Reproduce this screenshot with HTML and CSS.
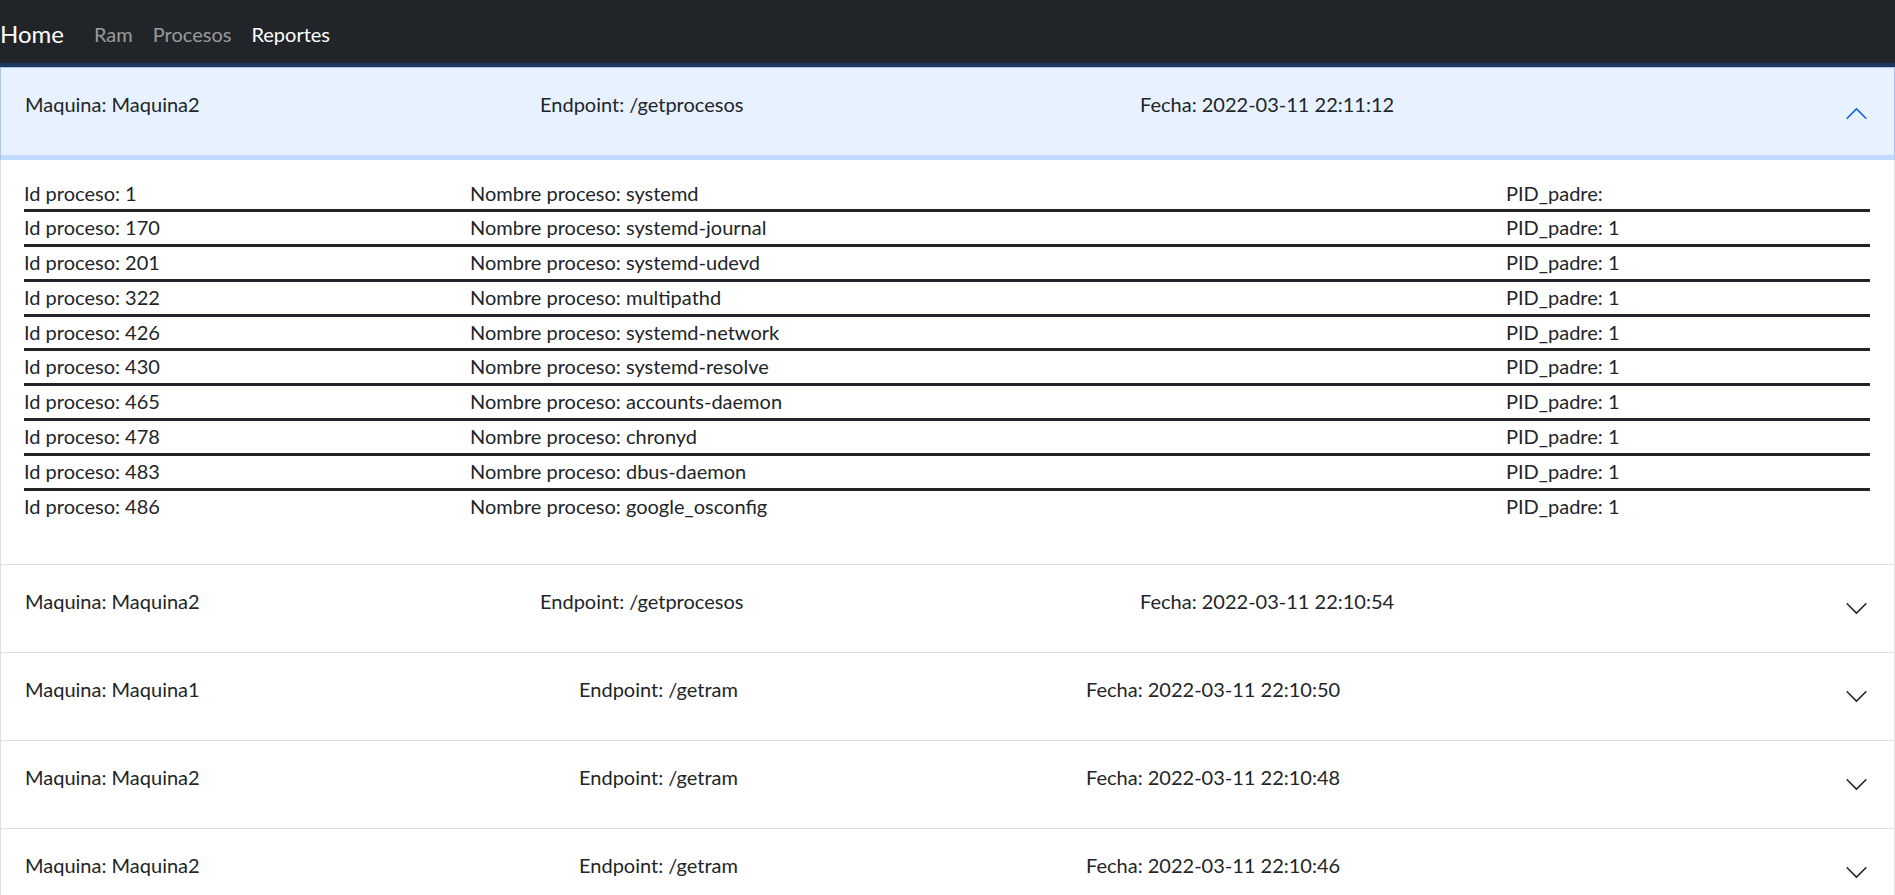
FILE: index.html
```html
<!DOCTYPE html>
<html lang="es">
<head>
<meta charset="utf-8">
<title>Reportes</title>
<link rel="stylesheet" href="styles.css">
</head>
<body>
<nav class="navbar">
  <a class="brand" href="#">Home</a>
  <a class="nav-link" href="#">Ram</a>
  <a class="nav-link" href="#">Procesos</a>
  <a class="nav-link active" href="#">Reportes</a>
</nav>

<div class="accordion">
  <div class="acc-item">
    <h2 class="acc-header">
      <button class="acc-btn open" type="button">
        <span class="hdr hdr-proc"><span>Maquina: Maquina2</span><span>Endpoint: /getprocesos</span><span>Fecha: 2022-03-11 22:11:12</span></span>
        <svg class="chev" viewBox="0 0 16 16"><path fill-rule="evenodd" d="M1.646 4.646a.5.5 0 0 1 .708 0L8 10.293l5.646-5.647a.5.5 0 0 1 .708.708l-6 6a.5.5 0 0 1-.708 0l-6-6a.5.5 0 0 1 0-.708z"/></svg>
      </button>
    </h2>
    <div class="acc-body">
      <ul class="proc-list">
        <li class="proc-row"><span>Id proceso: 1</span><span>Nombre proceso: systemd</span><span>PID_padre: </span></li>
        <li class="proc-row"><span>Id proceso: 170</span><span>Nombre proceso: systemd-journal</span><span>PID_padre: 1</span></li>
        <li class="proc-row"><span>Id proceso: 201</span><span>Nombre proceso: systemd-udevd</span><span>PID_padre: 1</span></li>
        <li class="proc-row"><span>Id proceso: 322</span><span>Nombre proceso: multipathd</span><span>PID_padre: 1</span></li>
        <li class="proc-row"><span>Id proceso: 426</span><span>Nombre proceso: systemd-network</span><span>PID_padre: 1</span></li>
        <li class="proc-row"><span>Id proceso: 430</span><span>Nombre proceso: systemd-resolve</span><span>PID_padre: 1</span></li>
        <li class="proc-row"><span>Id proceso: 465</span><span>Nombre proceso: accounts-daemon</span><span>PID_padre: 1</span></li>
        <li class="proc-row"><span>Id proceso: 478</span><span>Nombre proceso: chronyd</span><span>PID_padre: 1</span></li>
        <li class="proc-row"><span>Id proceso: 483</span><span>Nombre proceso: dbus-daemon</span><span>PID_padre: 1</span></li>
        <li class="proc-row"><span>Id proceso: 486</span><span>Nombre proceso: google_osconfig</span><span>PID_padre: 1</span></li>
      </ul>
    </div>
  </div>

  <div class="acc-item">
    <h2 class="acc-header">
      <button class="acc-btn" type="button">
        <span class="hdr hdr-proc"><span>Maquina: Maquina2</span><span>Endpoint: /getprocesos</span><span>Fecha: 2022-03-11 22:10:54</span></span>
        <svg class="chev" viewBox="0 0 16 16"><path fill-rule="evenodd" d="M1.646 4.646a.5.5 0 0 1 .708 0L8 10.293l5.646-5.647a.5.5 0 0 1 .708.708l-6 6a.5.5 0 0 1-.708 0l-6-6a.5.5 0 0 1 0-.708z"/></svg>
      </button>
    </h2>
  </div>

  <div class="acc-item">
    <h2 class="acc-header">
      <button class="acc-btn" type="button">
        <span class="hdr hdr-ram"><span>Maquina: Maquina1</span><span>Endpoint: /getram</span><span>Fecha: 2022-03-11 22:10:50</span></span>
        <svg class="chev" viewBox="0 0 16 16"><path fill-rule="evenodd" d="M1.646 4.646a.5.5 0 0 1 .708 0L8 10.293l5.646-5.647a.5.5 0 0 1 .708.708l-6 6a.5.5 0 0 1-.708 0l-6-6a.5.5 0 0 1 0-.708z"/></svg>
      </button>
    </h2>
  </div>

  <div class="acc-item">
    <h2 class="acc-header">
      <button class="acc-btn" type="button">
        <span class="hdr hdr-ram"><span>Maquina: Maquina2</span><span>Endpoint: /getram</span><span>Fecha: 2022-03-11 22:10:48</span></span>
        <svg class="chev" viewBox="0 0 16 16"><path fill-rule="evenodd" d="M1.646 4.646a.5.5 0 0 1 .708 0L8 10.293l5.646-5.647a.5.5 0 0 1 .708.708l-6 6a.5.5 0 0 1-.708 0l-6-6a.5.5 0 0 1 0-.708z"/></svg>
      </button>
    </h2>
  </div>

  <div class="acc-item">
    <h2 class="acc-header">
      <button class="acc-btn" type="button">
        <span class="hdr hdr-ram"><span>Maquina: Maquina2</span><span>Endpoint: /getram</span><span>Fecha: 2022-03-11 22:10:46</span></span>
        <svg class="chev" viewBox="0 0 16 16"><path fill-rule="evenodd" d="M1.646 4.646a.5.5 0 0 1 .708 0L8 10.293l5.646-5.647a.5.5 0 0 1 .708.708l-6 6a.5.5 0 0 1-.708 0l-6-6a.5.5 0 0 1 0-.708z"/></svg>
      </button>
    </h2>
  </div>
</div>
</body>
</html>
```

FILE: styles.css
```css
* {
  box-sizing: border-box;
}

html,
body {
  height: 895px;
  overflow: hidden;
}

body {
  margin: 0;
  font-family: Lato, "Liberation Sans", sans-serif;
  font-size: 20px;
  color: #212529;
  background: #fff;
}

.navbar {
  display: flex;
  align-items: center;
  height: 67px;
  background: #212529;
}

.brand {
  font-size: 24px;
  line-height: 36px;
  color: #fff;
  text-decoration: none;
  margin-right: 20px;
}

.nav-link {
  font-size: 20px;
  line-height: 30px;
  padding: 1px 10px 0;
  color: rgba(255, 255, 255, 0.55);
  text-decoration: none;
}

.nav-link.active {
  color: #fff;
}

.acc-item {
  border: 1px solid rgba(0, 0, 0, 0.125);
  border-top: 0;
}

.acc-item:first-child {
  border-top: 1px solid rgba(0, 0, 0, 0.125);
}

.acc-header {
  margin: 0;
  font-size: inherit;
  font-weight: 400;
}

.acc-btn {
  position: relative;
  display: flex;
  align-items: center;
  width: 100%;
  height: 87px;
  padding: 0 25px 0 24px;
  border: 0;
  background: #fff;
  font: inherit;
  color: #212529;
  text-align: left;
}

.acc-btn.open {
  z-index: 3;
  background: #e7f1ff;
  box-shadow: 0 0 0 5px rgba(13, 110, 253, 0.25);
}

.hdr {
  flex: 1;
  align-self: flex-start;
  display: grid;
  padding-top: 21px;
  line-height: 30px;
}

.hdr-proc {
  grid-template-columns: 515px 600px 1fr;
}

.hdr-ram {
  grid-template-columns: 554px 507px 1fr;
}

.chev {
  flex-shrink: 0;
  width: 25px;
  height: 25px;
  fill: #212529;
}

.acc-btn.open .chev {
  fill: #0c63e4;
  transform: translateY(2px) rotate(180deg);
}

.acc-body {
  padding: 22.5px 24px 41.5px 23px;
}

.proc-list {
  list-style: none;
  margin: 0;
  padding: 0;
}

.proc-row {
  display: grid;
  grid-template-columns: 446px 1036px 1fr;
  line-height: 30.8px;
  padding-bottom: 1px;
  border-bottom: 3px solid #212529;
}

.proc-row:last-child {
  border-bottom: 0;
}
```
